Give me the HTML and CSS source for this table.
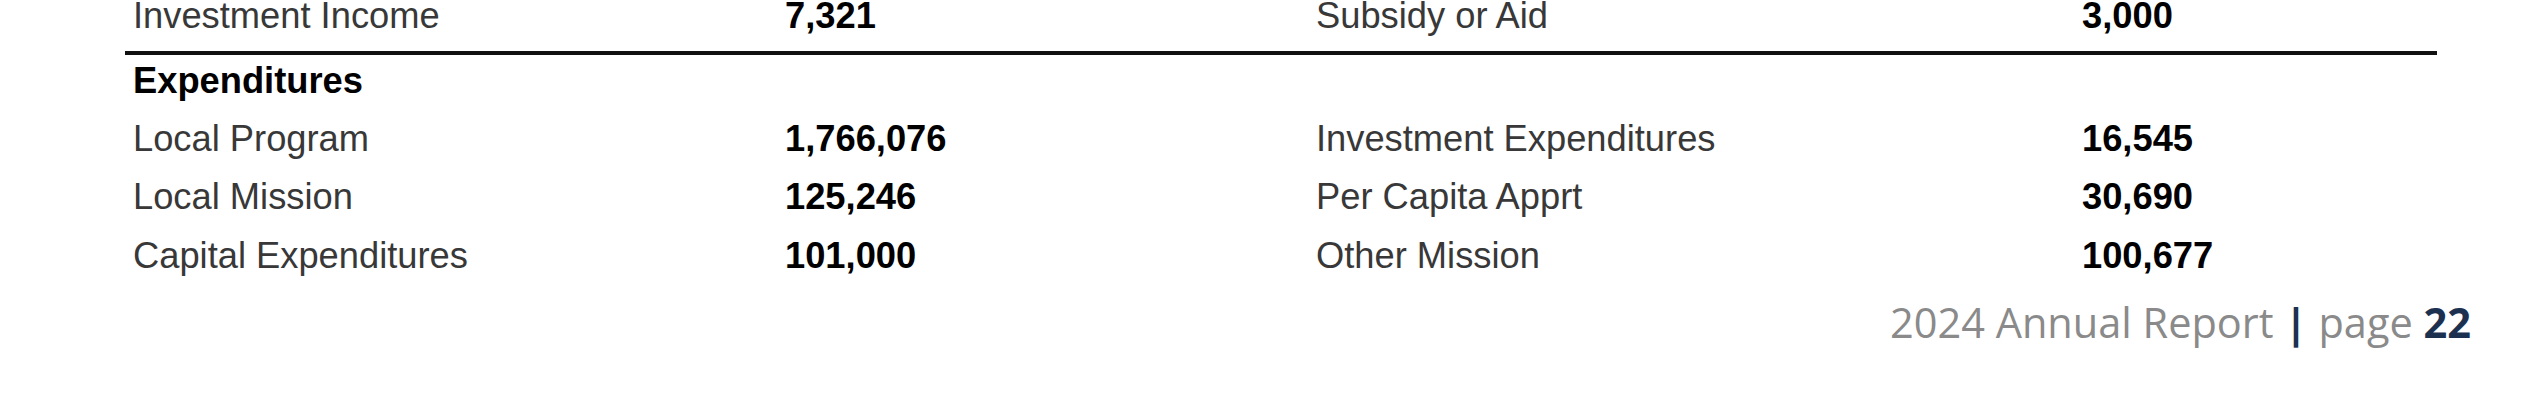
FILE: index.html
```html
<!DOCTYPE html>
<html lang="en">
<head>
<meta charset="utf-8">
<title>2024 Annual Report - page 22</title>
<link rel="stylesheet" href="styles.css">
</head>
<body>
<div class="page">
  <section class="sheet">
    <div class="group group-income">
      <div class="row">
        <span class="label">Investment Income</span>
        <span class="num">7,321</span>
        <span class="label">Subsidy or Aid</span>
        <span class="num">3,000</span>
      </div>
    </div>
    <div class="rule"></div>
    <div class="heading">Expenditures</div>
    <div class="row">
      <span class="label">Local Program</span>
      <span class="num">1,766,076</span>
      <span class="label">Investment Expenditures</span>
      <span class="num">16,545</span>
    </div>
    <div class="row">
      <span class="label">Local Mission</span>
      <span class="num">125,246</span>
      <span class="label">Per Capita Apprt</span>
      <span class="num">30,690</span>
    </div>
    <div class="row">
      <span class="label">Capital Expenditures</span>
      <span class="num">101,000</span>
      <span class="label">Other Mission</span>
      <span class="num">100,677</span>
    </div>
  </section>
  <footer class="footer">
    <span class="footer-title">2024 Annual Report</span>
    <span class="footer-sep">|</span>
    <span class="footer-page">page <b class="footer-num">22</b></span>
  </footer>
</div>
</body>
</html>
```

FILE: styles.css
```css
html, body {
  margin: 0;
  padding: 0;
  background: #ffffff;
}

body {
  width: 2544px;
  height: 406px;
  overflow: hidden;
}

.page {
  display: flex;
  flex-direction: column;
}

.sheet {
  margin-top: -13px;
  margin-left: 125px;
  width: 2312px;
  font-family: "Liberation Sans", Arial, sans-serif;
  font-size: 36.3px;
}

.row {
  display: grid;
  grid-template-columns: 652px 531px 766px 1fr;
  padding-left: 8px;
  height: 58.5px;
  line-height: 58.5px;
  white-space: nowrap;
}

.label {
  color: #383838;
}

.num {
  color: #000000;
  font-weight: bold;
}

.rule {
  margin-top: 5px;
  height: 4px;
  background: #111111;
}

.heading {
  padding-left: 8px;
  height: 55px;
  line-height: 52px;
  font-weight: bold;
  color: #000000;
}

.footer {
  display: flex;
  justify-content: flex-end;
  align-items: baseline;
  gap: 11px;
  margin-top: 9px;
  padding-right: 73px;
  font-family: "Open Sans", "Noto Sans", sans-serif;
  font-size: 41.5px;
  line-height: 56px;
  color: #8a8a8a;
  white-space: nowrap;
}

.footer-sep {
  color: #1c3150;
  font-weight: bold;
}

.footer-num {
  color: #1c3150;
  font-weight: bold;
}
```
